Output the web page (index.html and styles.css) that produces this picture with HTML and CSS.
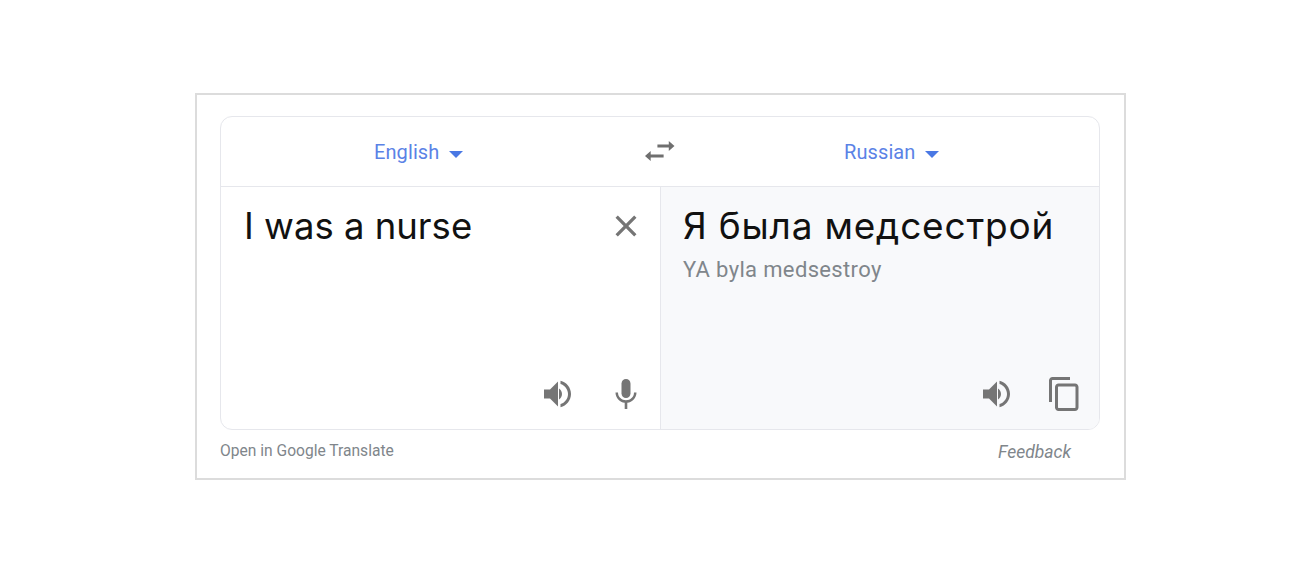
FILE: index.html
```html
<!DOCTYPE html>
<html lang="en">
<head>
<meta charset="utf-8">
<title>Translate widget</title>
<link rel="stylesheet" href="styles.css">
</head>
<body>
<section class="frame">
  <div class="card">
    <header class="langs">
      <div class="lang lang-src"><span>English</span><i class="caret"></i></div>
      <svg class="swap" viewBox="0 0 29 21" preserveAspectRatio="none"><path d="M23 0l5.500 5-5.500 5V6.600H12V3.400h11zM5.500 10v3.400H18v3.200H5.500V20L0 15z"/></svg>
      <div class="lang lang-dst"><span>Russian</span><i class="caret"></i></div>
    </header>
    <div class="panes">
      <div class="pane pane-src">
        <div class="row-top">
          <p class="big big-src">I was a nurse</p>
          <svg class="close" viewBox="0 0 24 24"><path d="M3 5 5 3l7 7 7-7 2 2-7 7 7 7-2 2-7-7-7 7-2-2 7-7z"/></svg>
        </div>
        <div class="tools">
          <svg class="ico" viewBox="0 0 32 32"><path d="M2 11.500v9h6l8 8V3.500l-8 8H2zM20 16c0-2.400-1.300-4.400-3-5.500v11c1.700-1.100 3-3.100 3-5.500z"/><path d="M18.500 2.800v3.100C22.800 7.200 26 11.200 26 16s-3.200 8.800-7.500 10.100v3.100C24.500 27.800 29 22.400 29 16S24.500 4.200 18.500 2.800z"/></svg>
          <svg class="ico" viewBox="0 0 32 32"><path d="M16 20c2.500 0 4.500-2 4.500-4.500v-10C20.500 3 18.500 1 16 1s-4.500 2-4.500 4.500v10C11.500 18 13.500 20 16 20z"/><path d="M24 14.500c0 4.600-3.700 7.700-8 7.700s-8-3.100-8-7.700H5.500c0 5.400 4.300 9.600 9.200 10.300V31h2.600v-6.200c4.900-.7 9.200-4.900 9.200-10.300H24z"/></svg>
        </div>
      </div>
      <div class="pane pane-dst">
        <p class="big big-dst">Я была медсестрой</p>
        <p class="translit">YA byla medsestroy</p>
        <div class="tools tools-dst">
          <svg class="ico" viewBox="0 0 32 32"><path d="M2 11.500v9h6l8 8V3.500l-8 8H2zM20 16c0-2.400-1.300-4.400-3-5.500v11c1.700-1.100 3-3.100 3-5.500z"/><path d="M18.500 2.800v3.100C22.800 7.200 26 11.200 26 16s-3.200 8.800-7.500 10.100v3.100C24.500 27.800 29 22.400 29 16S24.500 4.200 18.500 2.800z"/></svg>
          <svg class="ico ico-copy" viewBox="0 0 32 36"><path d="M22 1H4.500C2.600 1 1 2.600 1 4.500V26h3V4.500C4 4.200 4.200 4 4.500 4H22V1z"/><path d="M27 7.500H10.500C8.600 7.500 7 9.100 7 11v20.500C7 33.400 8.600 35 10.500 35H27c1.900 0 3.500-1.600 3.500-3.500V11c0-1.900-1.600-3.500-3.500-3.500zM27.500 31.500c0 .3-.2.500-.5.500H10.500c-.3 0-.5-.2-.5-.5V11c0-.3.2-.5.500-.5H27c.3 0 .5.2.5.500v20.500z"/></svg>
        </div>
      </div>
    </div>
  </div>
  <footer class="foot">
    <span>Open in Google Translate</span>
    <em>Feedback</em>
  </footer>
</section>
</body>
</html>
```

FILE: styles.css
```css
* { box-sizing: border-box; }
html, body { margin: 0; padding: 0; background: #fff; }
body { font-family: Roboto, "Liberation Sans", sans-serif; height: 573px; overflow: hidden; padding: 93px 0 0 195px; }
p { margin: 0; }
.frame { width: 931px; height: 387px; border: 2px solid #dcdcdc; padding: 21px 24px 0 23px; }
.card { width: 880px; height: 314px; border: 1.500px solid #e6e7ec; border-radius: 12px; overflow: hidden; display: flex; flex-direction: column; }
.langs { height: 70px; flex: none; display: flex; align-items: center; padding-top: 1px; border-bottom: 1.500px solid #e6e7ec; }
.lang { display: flex; align-items: center; gap: 10px; color: #5b82e6; font-size: 20px; letter-spacing: .1px; }
.lang-src { width: 424px; padding-left: 153px; }
.lang-dst { padding-left: 169px; }
.caret { width: 0; height: 0; margin-top: 4px; border: 7.500px solid transparent; border-top-color: #4a78e4; border-bottom: 0; }
.swap { width: 30px; height: 21px; fill: #6f6f6f; margin-top: -2px; }
.panes { flex: 1; display: flex; min-height: 0; }
.pane { display: flex; flex-direction: column; }
.pane-src { width: 440px; padding: 17px 18px 0 23px; border-right: 1.500px solid #e6e7ec; }
.pane-dst { flex: 1; padding: 17px 19px 0 22px; background: #f8f9fb; }
.row-top { display: flex; justify-content: space-between; }
.big { font-family: Inter, "Noto Sans", sans-serif; font-size: 36.500px; line-height: 44px; color: #111; }
.big-dst { font-size: 37px; letter-spacing: .8px; }
.translit { font-size: 22px; line-height: 28px; margin-top: 8px; color: #80868b; letter-spacing: .35px; }
.close { width: 28px; height: 28px; margin: 8px 2px 0 0; fill: #757575; }
.tools { margin-top: auto; height: 36px; margin-bottom: 17px; display: flex; justify-content: flex-end; align-items: center; gap: 36px; }
.tools-dst { gap: 35px; }
.ico { width: 32px; height: 32px; fill: #757575; }
.ico-copy { width: 32px; height: 36px; }
.foot { display: flex; justify-content: space-between; padding: 12px 29px 0 0; font-size: 15.600px; color: #80868b; }
.foot em { font-size: 17.500px; }
```
